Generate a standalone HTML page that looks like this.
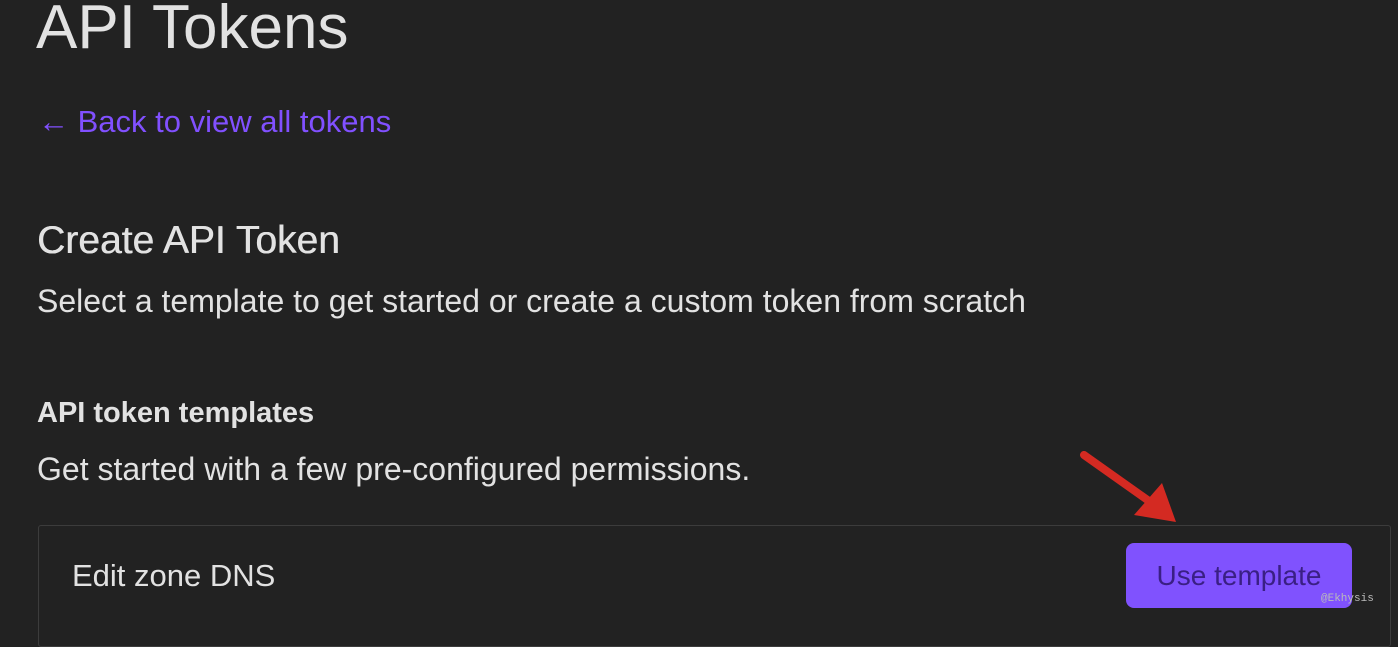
<!DOCTYPE html>
<html><head><meta charset="utf-8"><style>
body{margin:0;width:1398px;height:628px;background:#222222;overflow:hidden;font-family:"Liberation Sans",sans-serif;color:#e2e2e2;position:relative}
div{position:absolute;white-space:nowrap}
</style></head><body>
<div style="left:36px;top:-8px;font-size:62px;line-height:72px;">API Tokens</div>
<div style="left:38px;top:103px;font-size:31px;line-height:38px;color:#8150ff;">&#8592; Back to view all tokens</div>
<div style="left:37px;top:219px;font-size:39px;line-height:44px;text-shadow:0.5px 0 0 #e2e2e2;">Create API Token</div>
<div style="left:37px;top:282px;font-size:32px;line-height:38px;">Select a template to get started or create a custom token from scratch</div>
<div style="left:37px;top:396px;font-size:29px;line-height:34px;font-weight:bold;">API token templates</div>
<div style="left:37px;top:450px;font-size:32px;line-height:38px;">Get started with a few pre-configured permissions.</div>
<div style="left:38px;top:525px;width:1351px;height:120px;border:1px solid #3c3c3c;border-radius:3px;"></div>
<div style="left:72px;top:557px;font-size:31px;line-height:38px;">Edit zone DNS</div>
<div style="left:1126px;top:543px;width:226px;height:65px;background:#8052fe;border-radius:8px;color:#3a1f84;font-size:28px;line-height:65px;text-align:center;">Use template</div>
<div style="left:1321px;top:593px;font-size:11px;font-family:'Liberation Mono',monospace;color:#bbb;">@Ekhysis</div>
<svg style="position:absolute;left:1070px;top:445px" width="120" height="85">
<line x1="14" y1="10" x2="86" y2="61" stroke="#d42a22" stroke-width="8" stroke-linecap="round"/>
<polygon points="106,77 64,70 92,38" fill="#d42a22"/>
</svg>
</body></html>
